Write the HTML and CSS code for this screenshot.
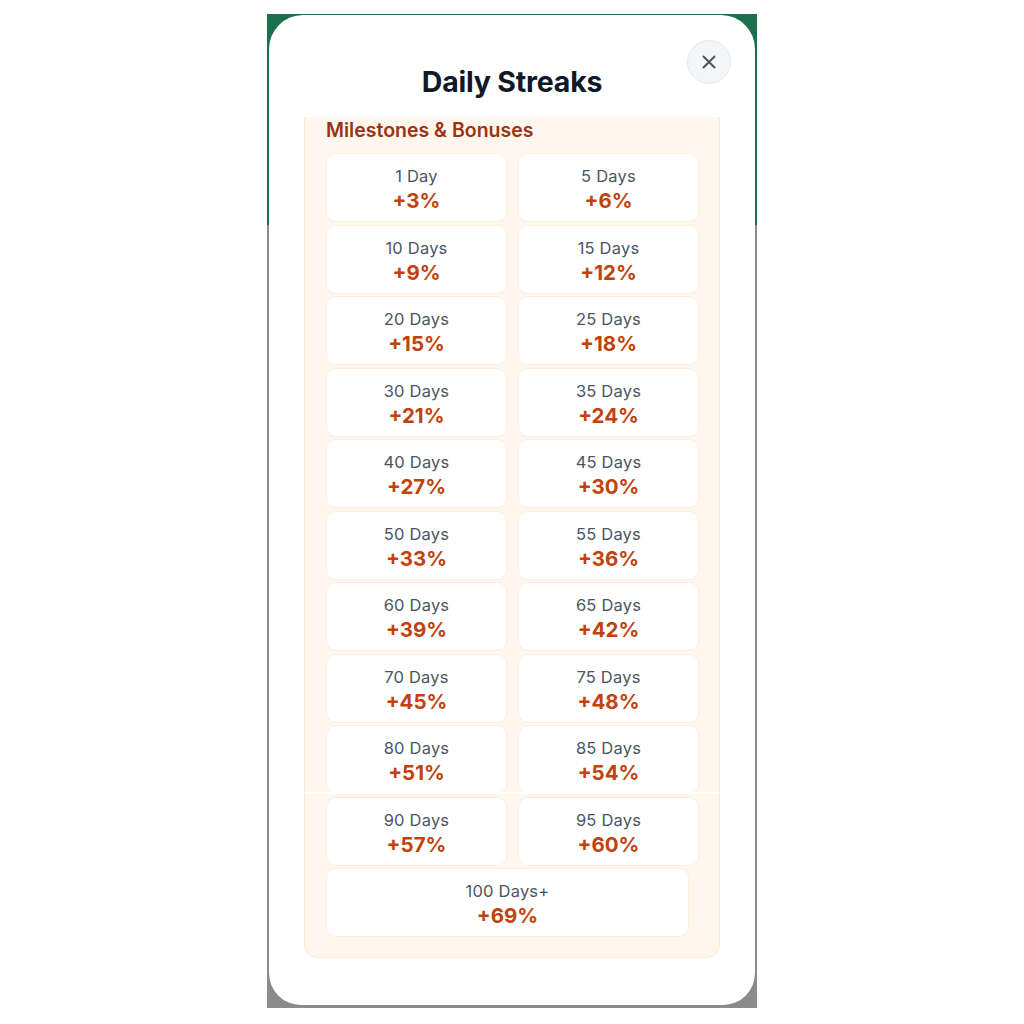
FILE: index.html
```html
<!DOCTYPE html>
<html lang="en">
<head>
<meta charset="utf-8">
<title>Daily Streaks</title>
<link rel="stylesheet" href="styles.css">
</head>
<body>
<div class="frame">
  <div class="modal">
    <header class="modal-header">
      <h1 class="title">Daily Streaks</h1>
      <button class="close" aria-label="Close">
        <svg viewBox="0 0 24 24" width="22" height="22"><path d="M6 6L18 18M18 6L6 18" stroke="#4b5563" stroke-width="2.2" stroke-linecap="round" fill="none"/></svg>
      </button>
    </header>
    <div class="scroll">
      <section class="panel">
        <h2 class="panel-title">Milestones &amp; Bonuses</h2>
        <div class="grid">
          <div class="card"><span class="label">1 Day</span><span class="value">+3%</span></div>
          <div class="card"><span class="label">5 Days</span><span class="value">+6%</span></div>
          <div class="card"><span class="label">10 Days</span><span class="value">+9%</span></div>
          <div class="card"><span class="label">15 Days</span><span class="value">+12%</span></div>
          <div class="card"><span class="label">20 Days</span><span class="value">+15%</span></div>
          <div class="card"><span class="label">25 Days</span><span class="value">+18%</span></div>
          <div class="card"><span class="label">30 Days</span><span class="value">+21%</span></div>
          <div class="card"><span class="label">35 Days</span><span class="value">+24%</span></div>
          <div class="card"><span class="label">40 Days</span><span class="value">+27%</span></div>
          <div class="card"><span class="label">45 Days</span><span class="value">+30%</span></div>
          <div class="card"><span class="label">50 Days</span><span class="value">+33%</span></div>
          <div class="card"><span class="label">55 Days</span><span class="value">+36%</span></div>
          <div class="card"><span class="label">60 Days</span><span class="value">+39%</span></div>
          <div class="card"><span class="label">65 Days</span><span class="value">+42%</span></div>
          <div class="card"><span class="label">70 Days</span><span class="value">+45%</span></div>
          <div class="card"><span class="label">75 Days</span><span class="value">+48%</span></div>
          <div class="card"><span class="label">80 Days</span><span class="value">+51%</span></div>
          <div class="card"><span class="label">85 Days</span><span class="value">+54%</span></div>
          <div class="card"><span class="label">90 Days</span><span class="value">+57%</span></div>
          <div class="card"><span class="label">95 Days</span><span class="value">+60%</span></div>
          <div class="card card-wide"><span class="label">100 Days+</span><span class="value">+69%</span></div>
        </div>
      </section>
    </div>
  </div>
</div>
</body>
</html>
```

FILE: styles.css
```css
* { box-sizing: border-box; }

html, body {
  margin: 0;
  padding: 0;
  background: #ffffff;
}

body {
  font-family: Inter, "Noto Sans", "Liberation Sans", sans-serif;
  padding-top: 14px;
}

.frame {
  width: 490px;
  height: 994px;
  margin: 0 auto;
  padding: 1px 2px 3px 2px;
  background: linear-gradient(#1b6e4e 0, #1b6e4e 211px, #8b8b8b 211px, #8b8b8b 100%);
}

.modal {
  position: relative;
  height: 990px;
  background: #ffffff;
  border-radius: 34px 34px 32px 32px;
  overflow: hidden;
  display: flex;
  flex-direction: column;
}

.modal-header {
  padding: 49px 0 17px;
  text-align: center;
}

.title {
  margin: 0;
  font-size: 28.5px;
  line-height: 36px;
  font-weight: 700;
  color: #111827;
  letter-spacing: -0.2px;
}

.close {
  position: absolute;
  top: 25px;
  right: 24px;
  width: 44px;
  height: 44px;
  border-radius: 50%;
  border: 1px solid #e5e7eb;
  background: #f5f6f8;
  display: flex;
  align-items: center;
  justify-content: center;
  padding: 0;
}

.scroll {
  overflow: hidden;
  padding: 0 35px;
}

.panel {
  margin-top: -2px;
  background: #fff7ed;
  border: 1px solid #fdebd6;
  border-top: none;
  border-radius: 0 0 14px 14px;
  padding: 3px 21px 20px 21px;
  position: relative;
}

.panel::after {
  content: "";
  position: absolute;
  left: 0;
  right: 0;
  top: 677px;
  height: 2px;
  background: #ffffff;
}

.panel-title {
  margin: 0 0 11px;
  font-size: 19.5px;
  line-height: 24px;
  font-weight: 600;
  color: #9a3412;
}

.grid {
  display: grid;
  grid-template-columns: 181px 181px;
  column-gap: 11px;
  row-gap: 2.5px;
}

.card {
  height: 69px;
  background: #ffffff;
  border: 1px solid #fdeedd;
  border-radius: 10px;
  display: flex;
  flex-direction: column;
  align-items: center;
  justify-content: center;
  padding-top: 3px;
}

.card-wide {
  grid-column: 1 / span 2;
  width: 363px;
}

.label {
  font-size: 16.5px;
  line-height: 23px;
  color: #4b5563;
  letter-spacing: 0.2px;
}

.value {
  font-size: 20.5px;
  line-height: 25px;
  font-weight: 700;
  color: #c2410c;
}
```
